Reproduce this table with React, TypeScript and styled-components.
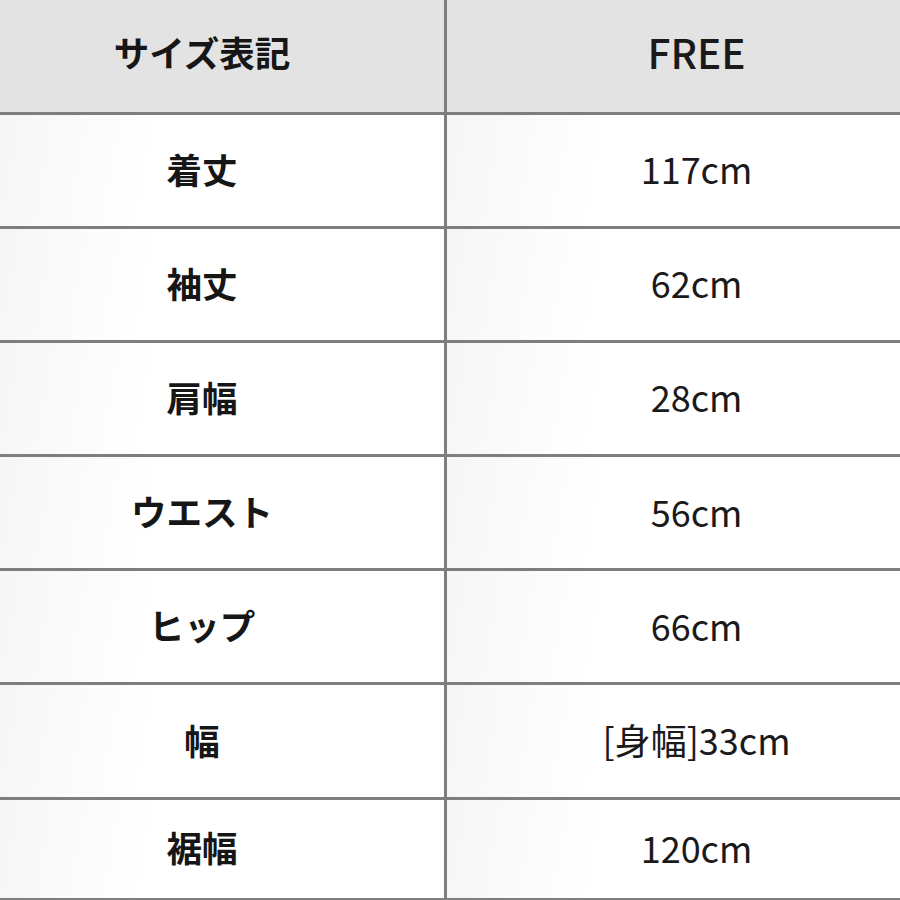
import styled, {createGlobalStyle} from "styled-components";

const GlobalStyle = createGlobalStyle`
  html, body {
    margin: 0;
    padding: 0;
    background: #ffffff;
  }
  body {
    font-family: "Noto Sans CJK JP", "Noto Sans", sans-serif;
    color: #1c1c1c;
  }
`

const Table = styled.div`
  width: 900px;
  height: 900px;
  box-sizing: border-box;
  display: grid;
  grid-template-columns: 444px 1fr;
  grid-template-rows: 111.5px repeat(6, 111.2px) 1fr;
  column-gap: 3px;
  row-gap: 3px;
  padding-bottom: 2px;
  background: #7e7e7e;
  overflow: hidden;
`

const Cell = styled.div<{ $head?: boolean; $value?: boolean }>`
  display: flex;
  align-items: center;
  justify-content: center;
  background: ${p => p.$head
    ? "#e4e3e4"
    : "linear-gradient(100deg, #f6f6f6 0%, #ffffff 35%, #ffffff 100%)"};
  padding: ${p => p.$value ? "0 0 0 46px" : "0 40px 0 0"};
  padding-bottom: ${p => p.$head ? "9px" : "4px"};
  box-sizing: border-box;
`

const Label = styled.span`
  font-size: 35.5px;
  font-weight: 700;
  color: #161616;
`

const Value = styled.span<{ $head?: boolean }>`
  font-size: ${p => p.$head ? "40.5px" : "36px"};
  font-weight: ${p => p.$head ? 500 : 400};
  color: #1a1a1a;
`

type Row = {
    label: string
    value: string
}

const rows: Row[] = [
    {label: "着丈", value: "117cm"},
    {label: "袖丈", value: "62cm"},
    {label: "肩幅", value: "28cm"},
    {label: "ウエスト", value: "56cm"},
    {label: "ヒップ", value: "66cm"},
    {label: "幅", value: "[身幅]33cm"},
    {label: "裾幅", value: "120cm"},
]

export default function App() {
    return <>
        <GlobalStyle/>
        <Table>
            <Cell $head><Label>サイズ表記</Label></Cell>
            <Cell $head $value><Value $head>FREE</Value></Cell>
            {rows.map(r => <>
                <Cell key={r.label + "-l"}><Label>{r.label}</Label></Cell>
                <Cell key={r.label + "-v"} $value><Value>{r.value}</Value></Cell>
            </>)}
        </Table>
    </>
}
